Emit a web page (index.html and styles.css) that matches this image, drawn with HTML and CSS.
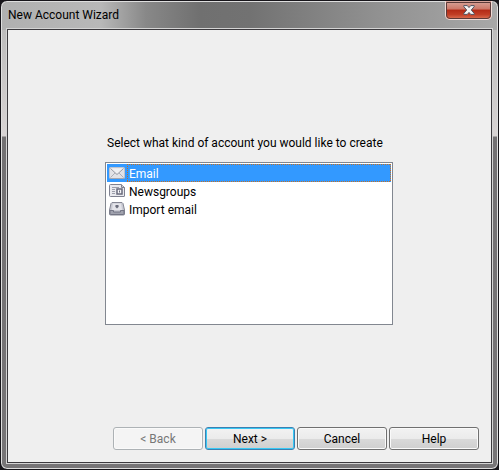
FILE: index.html
```
<!DOCTYPE html>
<html lang="en">
<head>
<meta charset="utf-8">
<title>New Account Wizard</title>
<link rel="stylesheet" href="styles.css">
</head>
<body>
<div class="window">
  <header class="titlebar">
    <h1 class="title">New Account Wizard</h1>
    <button class="close" type="button" aria-label="Close">
      <svg width="12" height="10" viewBox="0 0 12 10" aria-hidden="true">
        <path d="M.8.6H4.3L6 2.6 7.7.6h3.500v1L8.300 5l2.900 3.400v1H7.700L6 7.400 4.300 9.400H.8v-1L3.700 5 .8 1.600z" fill="#f4f4f4" stroke="#51525e" stroke-width="1"/>
      </svg>
    </button>
  </header>
  <form class="wizard">
    <main class="page">
      <p class="prompt" id="prompt">Select what kind of account you would like to create</p>
      <div class="listbox" role="radiogroup" aria-labelledby="prompt">
        <label class="item">
          <input class="choice" type="radio" name="kind" checked>
          <svg class="icon" width="16" height="14" viewBox="0 0 16 14" aria-hidden="true">
            <rect x=".5" y="1.500" width="15" height="11" rx="1" fill="#e2e2e6" stroke="#c2c4cc"/>
            <path d="M1.500 11.500 6 7M14.500 11.500 10 7" fill="none" stroke="#aeb0b8"/>
            <path d="M1.500 2.500 8 8.500l6.500-6" fill="#f0f0f2" stroke="#9698a2"/>
            <path d="M1 12.500h14" stroke="#a5a7b0"/>
          </svg>
          <span class="name">Email</span>
        </label>
        <label class="item">
          <input class="choice" type="radio" name="kind">
          <svg class="icon" width="16" height="14" viewBox="0 0 16 14" aria-hidden="true">
            <path d="M1.500 .5h10.500l3.500 3v8.500q0 .5-.5.500H1.500q-1 0-1-1v-10q0-1 1-1z" fill="#e9e9ee" stroke="#7f8190"/>
            <path d="M12.500 .5v3h3" fill="none" stroke="#7f8190"/>
            <path d="M3 3.500h7M3 5.500h3M3 7.500h3M3 9.500h3" stroke="#9c9eaa"/>
            <rect x="8" y="5" width="5" height="5" fill="#f5f5f7" stroke="#686a7c" stroke-width="1.500"/>
            <path d="M10.500 6.500v2" stroke="#686a7c"/>
          </svg>
          <span class="name">Newsgroups</span>
        </label>
        <label class="item">
          <input class="choice" type="radio" name="kind">
          <svg class="icon" width="16" height="14" viewBox="0 0 16 14" aria-hidden="true">
            <path d="M3 .5h10l1 1L15.500 8v4q0 1-1 1h-13q-1 0-1-1V8L2 1.500z" fill="#c9cad3" stroke="#858794"/>
            <path d="M4 1.500h8l1 6.500H3z" fill="#e4e4ea"/>
            <path d="M1 8.500h3.500v1.500h7V8.500H15V12q0 .5-.5.500h-13Q1 12.500 1 12z" fill="#a0a2ae" stroke="#737584"/>
            <path d="M6.500 3h3v1.500h.5L8 6.500 6 4.500h.5z" fill="#6b6d7c"/>
          </svg>
          <span class="name">Import email</span>
        </label>
      </div>
    </main>
    <footer class="actions">
      <button class="button" type="button" disabled>&lt; Back</button>
      <button class="button primary" type="submit">Next &gt;</button>
      <button class="button" type="button">Cancel</button>
      <button class="button" type="button">Help</button>
    </footer>
  </form>
</div>
</body>
</html>
```
FILE: styles.css
```
* { box-sizing: border-box; }

body {
  margin: 0;
  background: #17151a;
  color: #000;
  font: 12px/16px Roboto, "Open Sans", sans-serif;
}

.window {
  display: flex;
  flex-direction: column;
  min-height: 100vh;
  padding: 0 6px 6px;
  border: 1px solid #17151a;
  border-radius: 7px;
  box-shadow: inset 0 0 0 1px #dedede;
  background:
    linear-gradient(90deg, #b0b0b0 0, #b8b8b8 100px, #888 145px, #707070 40%, #727272 50%, #909090 75%, #a8a8a8) top / 100% 29px no-repeat,
    linear-gradient(#b5b5b5, #d8d4d4 135px, #737173 136px, #777577);
}

.titlebar {
  display: flex;
  justify-content: space-between;
  height: 28px;
  padding-left: 1px;
}

.title {
  margin: 6px 0 0;
  font: inherit;
}

.close {
  display: flex;
  align-items: center;
  justify-content: center;
  width: 47px;
  height: 19px;
  padding: 0;
  border: 1px solid #f0d8d4;
  border-top: 0;
  border-radius: 0 0 5px 5px;
  outline: 1px solid #5c3a38;
  outline-offset: -2px;
  background: linear-gradient(#d8a79d, #cd7767 45%, #b32a16 50%, #c13e25 75%, #dd7355);
}

.wizard {
  display: flex;
  flex: 1;
  flex-direction: column;
  border: 1px solid #3c3a3e;
  outline: 1px solid #d4d4d4;
  background: #efefef;
}

.page {
  flex: 1;
  padding: 105px 98px 0 97px;
}

.prompt {
  margin: 0 0 11px;
  padding-left: 2px;
  white-space: nowrap;
}

.listbox {
  min-height: 163px;
  padding: 1px;
  border: 1px solid #828790;
  background: #fff;
}

.item {
  display: flex;
  align-items: center;
  gap: 2px;
  height: 18px;
  padding-left: 2px;
}

.choice {
  position: absolute;
  margin: 0;
  opacity: 0;
}

.icon { flex: none; }

.name {
  flex: 1;
  height: 18px;
  padding: 2px 0 0 2px;
}

.item:has(:checked) {
  background: #39f;
  color: #fff;
}

.item:has(:checked) .name {
  --dots: #c87020 0 1px, transparent 1px 2px;
  background:
    repeating-linear-gradient(90deg, var(--dots)) top / 100% 1px no-repeat,
    repeating-linear-gradient(90deg, var(--dots)) bottom / 100% 1px no-repeat,
    repeating-linear-gradient(var(--dots)) left / 1px 100% no-repeat,
    repeating-linear-gradient(var(--dots)) right / 1px 100% no-repeat;
}

.actions {
  display: flex;
  justify-content: flex-end;
  gap: 2px;
  padding: 12px;
}

.button {
  width: 90px;
  height: 23px;
  padding: 0;
  border: 1px solid #707070;
  border-radius: 3px;
  box-shadow: inset 0 0 0 1px #fafafa;
  background: linear-gradient(#f2f2f2, #ebebeb 50%, #dadada 50%, #cfcfcf);
  color: #000;
  font: inherit;
}

.button:disabled {
  border-color: #adb2b5;
  background: #f4f4f4;
  color: #777;
}

.primary {
  border-color: #3c7fb1;
  box-shadow: inset 0 0 0 1px #38c8f4;
}
```
